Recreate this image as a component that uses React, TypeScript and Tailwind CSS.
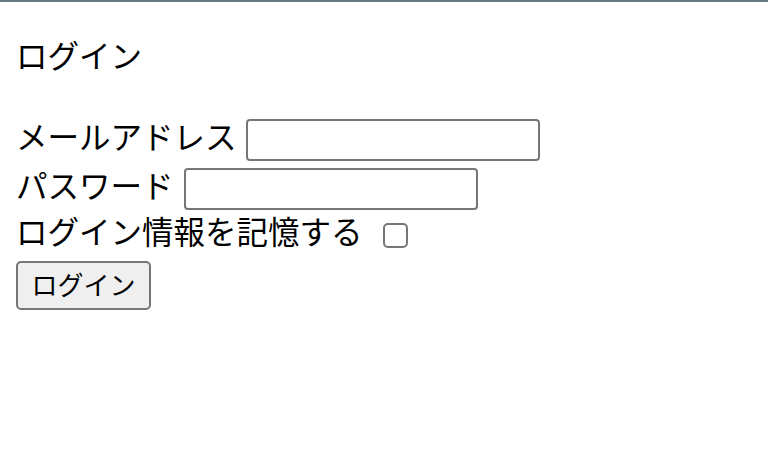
import React from "react";

export default function App() {
  return (
    <div
      className="w-[768px] h-[451px] bg-white text-black border-t-2 border-[#667880] overflow-hidden"
      style={{ fontFamily: '"Noto Sans CJK JP", "Noto Sans", sans-serif' }}
    >
      <div className="pl-4 text-[31.5px]">
        <div className="mt-[30px] h-[44px] leading-[44px]">ログイン</div>
        <div className="mt-[40px] flex h-[48px] items-center">
          <span className="pb-[8px] leading-none">メールアドレス</span>
          <input
            type="text"
            className="ml-[9px] h-[42px] w-[294px] rounded-[4px] border-2 border-[#767676] bg-white"
          />
        </div>
        <div className="flex h-[50px] items-center">
          <span className="pb-[8px] leading-none">パスワード</span>
          <input
            type="password"
            className="ml-[10px] h-[42px] w-[294px] rounded-[4px] border-2 border-[#767676] bg-white"
          />
        </div>
        <div className="flex h-[42px] items-center">
          <span className="pb-[8px] leading-none">ログイン情報を記憶する</span>
          <span className="ml-[20px] inline-block h-[25px] w-[25px] rounded-[5px] border-2 border-[#767676] bg-white" />
        </div>
        <button
          type="button"
          className="mt-[5px] flex h-[49px] w-[135px] items-center justify-center rounded-[5px] border-2 border-[#767676] bg-[#efefef] pb-[4px] text-[26px] leading-none"
        >
          ログイン
        </button>
      </div>
    </div>
  );
}
